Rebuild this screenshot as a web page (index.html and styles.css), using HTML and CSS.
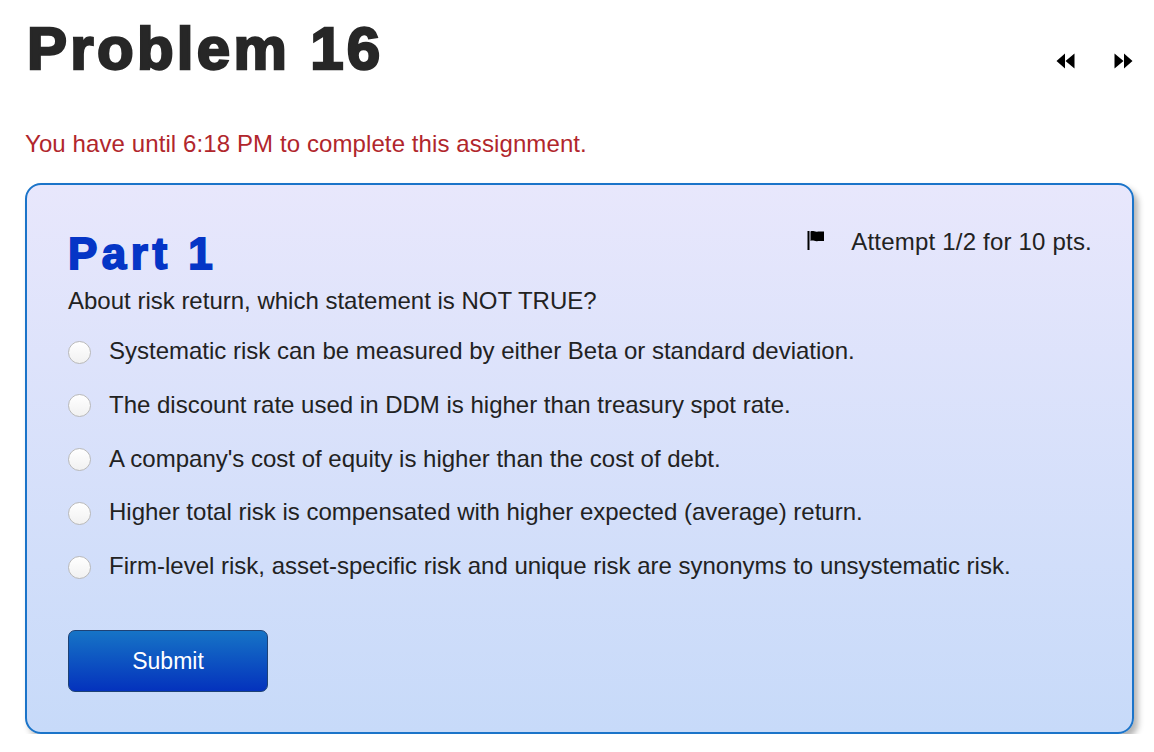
FILE: index.html
```html
<!DOCTYPE html>
<html>
<head>
<meta charset="utf-8">
<link rel="stylesheet" href="styles.css">
</head>
<body>
<div class="page">
  <header class="top">
    <h1 class="title">Problem 16</h1>
    <nav class="nav">
      <svg class="navicon" width="19" height="16" viewBox="0 0 19 16"><path d="M9 0.5 L0.5 8 L9 15.5 Z M18.5 0.5 L9.5 8 L18.5 15.5 Z" fill="#000"/></svg>
      <svg class="navicon" width="19" height="16" viewBox="0 0 19 16"><path d="M0.5 0.5 L9.5 8 L0.5 15.5 Z M10 0.5 L18.5 8 L10 15.5 Z" fill="#000"/></svg>
    </nav>
  </header>
  <p class="deadline">You have until 6:18 PM to complete this assignment.</p>
  <section class="panel">
    <div class="panel-head">
      <h2 class="part">Part 1</h2>
      <div class="attempt">
        <svg class="flag" width="18" height="20" viewBox="0 0 18 20"><rect x="0.5" y="1" width="2" height="19" fill="#000"/><path d="M3.5 1.5 C6 0 8 2.5 11 1.5 L17 1.5 L17 11 L11 11 C8 12 6 9.5 3.5 11 Z" fill="#000"/></svg>
        <span>Attempt 1/2 for 10 pts.</span>
      </div>
    </div>
    <p class="question">About risk return, which statement is NOT TRUE?</p>
    <ul class="options">
      <li><span class="radio"></span><span>Systematic risk can be measured by either Beta or standard deviation.</span></li>
      <li><span class="radio"></span><span>The discount rate used in DDM is higher than treasury spot rate.</span></li>
      <li><span class="radio"></span><span>A company's cost of equity is higher than the cost of debt.</span></li>
      <li><span class="radio"></span><span>Higher total risk is compensated with higher expected (average) return.</span></li>
      <li><span class="radio"></span><span>Firm-level risk, asset-specific risk and unique risk are synonyms to unsystematic risk.</span></li>
    </ul>
    <button class="submit">Submit</button>
  </section>
</div>
</body>
</html>
```
FILE: styles.css
```css
html, body { margin: 0; padding: 0; background: #fff; }
body { font-family: "Liberation Sans", Arial, sans-serif; color: #222; }
.page { padding: 0 20px 0 25px; }
.top { display: flex; justify-content: space-between; align-items: flex-start; height: 110px; }
.title {
  margin: 17px 0 0 2px;
  font-size: 60px;
  line-height: 64px;
  font-weight: 700;
  color: #272727;
  letter-spacing: 3.3px;
  -webkit-text-stroke: 2.4px #272727;
}
.nav { display: flex; gap: 39px; margin-top: 53px; margin-right: 1px; }
.navicon { display: block; }
.deadline { margin: 20px 0 0 0; font-size: 24px; line-height: 28px; color: #b1262c; letter-spacing: 0.1px; }
.panel {
  margin-top: 25px;
  border: 2px solid #1b74c9;
  border-radius: 16px;
  background: linear-gradient(#e8e7fc, #c7daf9);
  box-shadow: 4px 5px 6px rgba(0,0,0,0.3);
  padding: 38px 40px 38px 41px;
  height: 551px;
  box-sizing: border-box;
}
.panel-head { display: flex; justify-content: space-between; align-items: flex-start; }
.part {
  margin: 7px 0 0 0;
  font-size: 44px;
  line-height: 48px;
  color: #0535c6;
  letter-spacing: 4.5px;
  -webkit-text-stroke: 1.8px #0535c6;
}
.attempt { display: flex; align-items: flex-start; gap: 26px; font-size: 24px; line-height: 28px; color: #222; margin-top: 5px; letter-spacing: 0.2px; }
.flag { display: block; margin-top: 2px; }
.question { margin: 9px 0 0 0; font-size: 24px; line-height: 28px; }
.options { list-style: none; margin: 22px 0 0 0; padding: 0; display: flex; flex-direction: column; gap: 25.75px; }
.options li { display: flex; align-items: center; gap: 18px; font-size: 24px; line-height: 28px; }
.radio {
  width: 21px; height: 21px; border-radius: 50%;
  background: linear-gradient(#ffffff, #f1f1f1);
  border: 1px solid #b9b9b9;
  flex: none;
  margin-top: 2px;
}
.submit {
  margin-top: 50px;
  width: 200px; height: 62px;
  border: 1px solid #1e4275;
  border-radius: 7px;
  background: linear-gradient(#1674c6, #0432bd);
  color: #fff;
  font-family: "Liberation Sans", Arial, sans-serif;
  font-size: 23px;
  cursor: pointer;
}
```
